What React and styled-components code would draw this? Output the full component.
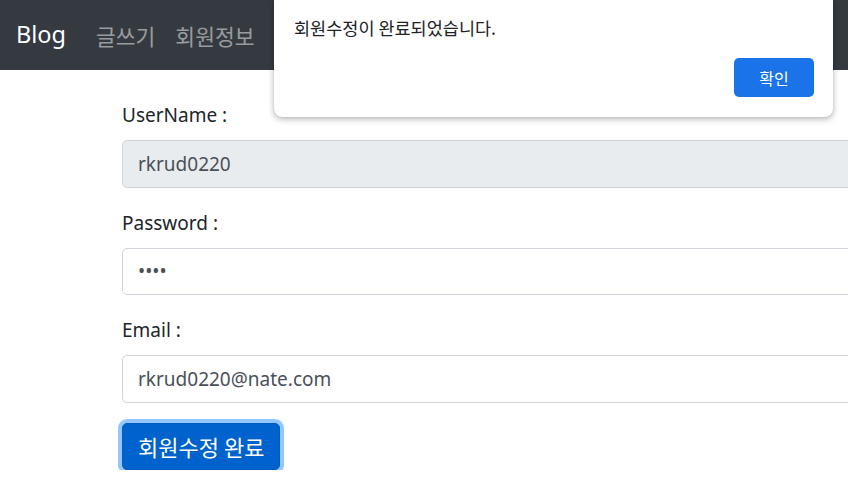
import React from 'react';
import styled, { createGlobalStyle } from 'styled-components';

const GlobalStyle = createGlobalStyle`
  body {
    margin: 0;
    overflow: hidden;
    background: #fff;
    font-family: "Noto Sans", "Noto Sans CJK KR", sans-serif;
    color: #212529;
  }
`

const KR = `"Noto Sans CJK KR", "Noto Sans", sans-serif`

const NavBar = styled.nav`
  height: 70px;
  background: #343a40;
  display: flex;
  align-items: center;
  padding: 0 16px;
  box-sizing: border-box;
`
const Brand = styled.a`
  font-size: 23.5px;
  color: #fff;
  margin-right: 20px;
  padding-bottom: 2px;
`
const NavLink = styled.a`
  font-family: ${KR};
  font-size: 21.5px;
  color: rgba(255, 255, 255, 0.5);
  padding: 0 10px;
`
const Container = styled.div`
  padding: 30px 0 0 122px;
`
const FormGroup = styled.div`
  margin-bottom: 20px;
`
const Label = styled.label`
  display: block;
  font-size: 19px;
  line-height: 31px;
  margin-bottom: 9px;
`
const Input = styled.input`
  display: block;
  box-sizing: border-box;
  width: 1100px;
  height: 47.5px;
  padding: 0 15px;
  font-family: "Noto Sans", sans-serif;
  font-size: 19px;
  color: #495057;
  background: ${p => (p.readOnly ? '#e9ecef' : '#fff')};
  border: 1px solid #ced4da;
  border-radius: 5px;
  outline: none;
`
const SubmitButton = styled.button`
  font-family: ${KR};
  font-size: 22px;
  color: #fff;
  background: #0062cc;
  border: 1px solid #005cbf;
  border-radius: 5px;
  height: 47.5px;
  padding: 0 15px;
  box-shadow: 0 0 0 4px rgba(38, 143, 255, 0.5);
`
const Alert = styled.div`
  position: absolute;
  top: 0;
  left: 274px;
  width: 559px;
  height: 117px;
  box-sizing: border-box;
  background: #fff;
  border-radius: 0 0 8px 8px;
  box-shadow: 0 2px 6px rgba(0, 0, 0, 0.3), 0 0 1px rgba(0, 0, 0, 0.2);
  padding: 15px 19px 20px 20px;
  display: flex;
  flex-direction: column;
  justify-content: space-between;
`
const AlertText = styled.div`
  font-family: ${KR};
  font-size: 17.5px;
  color: #202124;
`
const AlertButton = styled.button`
  align-self: flex-end;
  width: 80px;
  height: 39px;
  border: none;
  border-radius: 5px;
  background: #1a73e8;
  color: #fff;
  font-family: ${KR};
  font-size: 16px;
`

export default function App() {
  return (
    <>
      <GlobalStyle />
      <NavBar>
        <Brand>Blog</Brand>
        <NavLink>글쓰기</NavLink>
        <NavLink>회원정보</NavLink>
      </NavBar>
      <Container>
        <FormGroup>
          <Label>UserName :</Label>
          <Input readOnly value="rkrud0220" />
        </FormGroup>
        <FormGroup>
          <Label>Password :</Label>
          <Input type="password" value="1234" onChange={() => {}} />
        </FormGroup>
        <FormGroup>
          <Label>Email :</Label>
          <Input value="rkrud0220@nate.com" onChange={() => {}} />
        </FormGroup>
        <SubmitButton>회원수정 완료</SubmitButton>
      </Container>
      <Alert>
        <AlertText>회원수정이 완료되었습니다.</AlertText>
        <AlertButton>확인</AlertButton>
      </Alert>
    </>
  );
}
